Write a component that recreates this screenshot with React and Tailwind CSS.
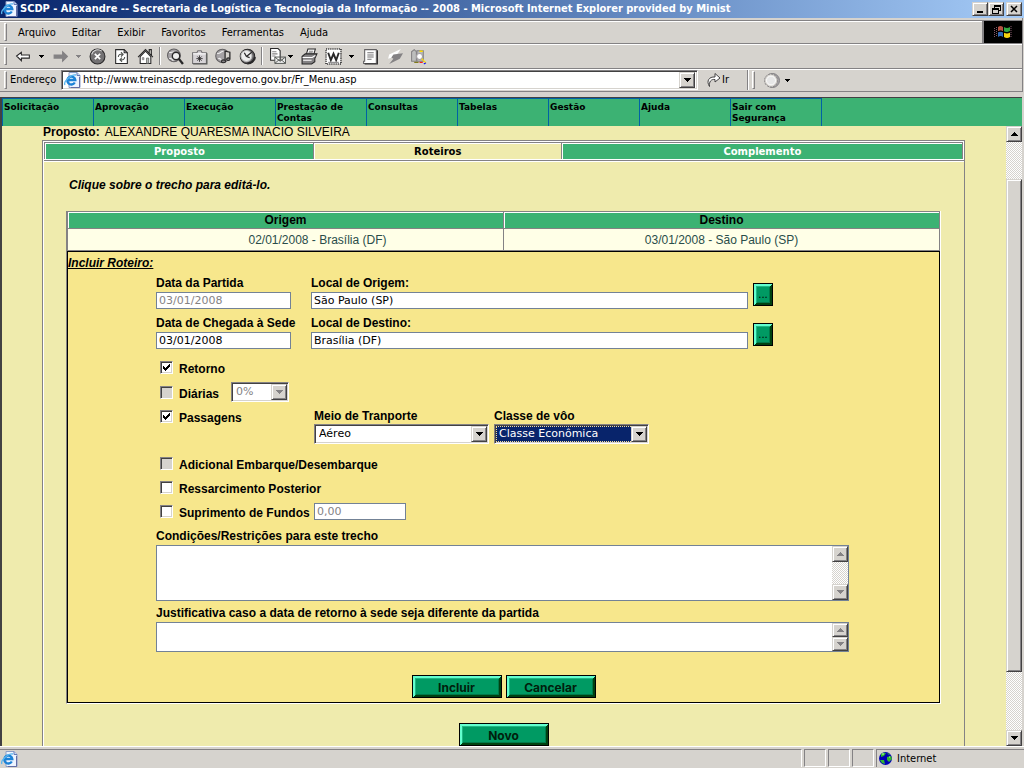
import React, { useState } from 'react';

// --- MENU DATA ---
const BROWSER_MENU = ['Arquivo', 'Editar', 'Exibir', 'Favoritos', 'Ferramentas', 'Ajuda'];
const APP_MENU = ['Solicitação', 'Aprovação', 'Execução', 'Prestação de Contas', 'Consultas', 'Tabelas', 'Gestão', 'Ajuda', 'Sair com Segurança'];

const TAHOMA = "font-['DejaVu_Sans_Condensed','DejaVu_Sans',sans-serif]";
const VERDANA = "font-['DejaVu_Sans',sans-serif]";
const RAISED = 'bg-[#d6d3ce] border border-t-[#d6d3ce] border-l-[#d6d3ce] border-r-[#424142] border-b-[#424142] shadow-[inset_1px_1px_0_#fff,inset_-1px_-1px_0_#848284]';
const SUNKEN = 'border border-t-[#848284] border-l-[#848284] border-r-white border-b-white shadow-[inset_1px_1px_0_#424142,inset_-1px_-1px_0_#d6d3ce]';
const DITHER = 'bg-[repeating-conic-gradient(#fff_0_25%,#d6d3ce_0_50%)] bg-[length:2px_2px]';
const FIELD = `${VERDANA} h-[17px] min-w-0 border border-[#738296] bg-white px-[2px] text-[11px] leading-[15px] font-normal text-black disabled:text-[#848284]`;

// --- ICONS ---
const Arrow = ({ up, color = '#000' }) => (
    <svg width="7" height="4" viewBox="0 0 7 4" shapeRendering="crispEdges" aria-hidden="true">
        <path d={up ? 'M3 0h1v1h1v1h1v1h1v1H0V3h1V2h1V1h1z' : 'M0 0h7v1H6v1H5v1H4v1H3V3H2V2H1V1H0z'} fill={color} />
    </svg>
);

const IeIcon = () => (
    <svg width="17" height="16" viewBox="0 0 17 16" className="shrink-0" aria-hidden="true">
        <path d="M5 .5h8l3 3v12H5z" fill="#eef4ff" stroke="#8c9ec6" />
        <path d="M13 .5v3h3" fill="#c6d7f7" stroke="#637bb5" />
        <path d="M15.500 5v10.500H7" fill="none" stroke="#636da5" />
        <path d="M10.800 10.500A4 4 0 1 1 11.300 8H4" fill="none" stroke="#1c82d6" strokeWidth="2.300" />
        <path d="M1 13C-1 10 7 2 12 3" fill="none" stroke="#5ab6ef" strokeWidth="1.300" />
    </svg>
);

const Icon = ({ children }) => (
    <svg width="17" height="17" viewBox="0 0 16 16" fill="none" stroke="#292829" aria-hidden="true">{children}</svg>
);

const BackIcon = () => <Icon><path d="M1.500 7.500 6 4v2.500h7.500v3H6V12z" fill="#fff" /></Icon>;
const ForwardIcon = () => <Icon><path d="M14.500 8 10 3.500V6.500H2v3h8v3z" fill="#848284" stroke="#848284" /></Icon>;
const StopIcon = () => (
    <Icon>
        <circle cx="8" cy="8" r="7" fill="#737173" />
        <path d="M2.500 6A6 6 0 0 1 12 3" stroke="#ddd" />
        <path d="m5.500 5.500 5 5m0-5-5 5" stroke="#fff" strokeWidth="1.600" />
    </Icon>
);
const RefreshIcon = () => (
    <Icon>
        <path d="M2.500 1.500h8l3 3v10h-11z" fill="#fff" />
        <path d="M10.500 1.500v3h3" />
        <path d="M5 8.500C5 6 7 5.500 9 6M7.500 4l2 2-2 2M11 8.500c0 2.500-2 3-4 2.500M8.500 9l-2 2 2 2" stroke="#525552" />
    </Icon>
);
const HomeIcon = () => (
    <Icon>
        <path d="M3 8v6.500h10V8L8 3z" fill="#fff" />
        <path d="M1 8.500 8 1.500l7 7M11.500 4.500v-3h2v5.500" />
        <path d="M5 9h1.500v2H5z" fill="#a5a2a5" stroke="#848284" strokeWidth=".700" />
        <path d="M9 9.500h2v5H9z" fill="#bdbebd" stroke="#525552" strokeWidth=".700" />
    </Icon>
);
const SearchIcon = () => (
    <Icon>
        <circle cx="6.500" cy="7" r="6" fill="#a5a2a5" stroke="#636163" />
        <path d="M2 4c2 1 3-1 5 0M2 10c2-1 3 1 4 2" stroke="#eee" />
        <circle cx="8.500" cy="7.500" r="3.500" fill="#eee" strokeWidth="1.300" />
        <path d="m11 10 4 5" strokeWidth="2.200" />
    </Icon>
);
const FavoritesIcon = () => (
    <Icon>
        <path d="M1.500 4.500h4l1-2h3l1 2h4v10h-13z" fill="#d6d3d6" stroke="#737173" />
        <path d="M2 5.500h12" stroke="#fff" />
        <path d="M15 5v10H2" stroke="#525552" />
        <path d="M8 7v6M5 10h6M6 8l4 4M10 8l-4 4" strokeWidth=".800" />
    </Icon>
);
const MediaIcon = () => (
    <Icon>
        <circle cx="7" cy="7.500" r="6.300" fill="#a5a2a5" stroke="#636163" />
        <path d="M2 5c3 1 3-2 6-2M3 10c2-1 3 1 4 3" stroke="#eee" />
        <path d="M9.500 12V3l4.500 1v6" fill="#d6d3ce" strokeWidth="1.200" />
        <ellipse cx="8" cy="12.500" rx="2" ry="1.300" fill="#848284" />
        <ellipse cx="12.500" cy="10.500" rx="1.600" ry="1.200" fill="#848284" />
    </Icon>
);
const HistoryIcon = () => (
    <Icon>
        <circle cx="8" cy="8" r="6.800" fill="#636163" />
        <circle cx="7" cy="7.500" r="5.200" fill="#eee" stroke="#bbb" />
        <path d="M7 8 5 4.500M7 8l5-4M7 8l3 1" strokeWidth="1.200" />
        <path d="M8 14.500a7 7 0 0 0 7-6" strokeWidth="2" />
    </Icon>
);
const MailIcon = () => (
    <Icon>
        <path d="M1.500.500h7l2 2v9h-9z" fill="#fff" />
        <path d="M3 3.500h4M3 5.500h5M3 7.500h3" stroke="#848284" />
        <path d="M5.500 8.500h10v6h-10zM5.500 8.500l5 4 5-4M5.500 14.500l4-3.500M15.500 14.500l-4-3.500" fill="#eee" stroke="#525552" strokeWidth=".900" />
    </Icon>
);
const PrintIcon = () => (
    <Icon>
        <path d="M5 6 6.500 1h7L12 6z" fill="#fff" />
        <path d="M7.500 3h4M7 4.500h4" stroke="#848284" />
        <path d="m1 8 3-2.500h11l-2 4.500v3l-3 2H1z" fill="#848284" />
        <path d="M1.500 9h9l3-2M2 11.500h8" stroke="#fff" />
    </Icon>
);
const WordIcon = () => (
    <Icon>
        <path d="M1 1h14v14H1z" fill="#fff" strokeDasharray="1 1" strokeWidth="1.500" />
        <path d="m3 4.500 2.500 7L8 5.500l2.500 6 2.500-7" strokeWidth="1.800" />
        <path d="M3 13.500h10" stroke="#848284" />
    </Icon>
);
const EditIcon = () => (
    <Icon>
        <path d="M2.500 1.500h11v13h-12v-2h1z" fill="#fff" stroke="#636163" />
        <path d="M5 4.500h6M5 6.500h6M5 8.500h6M5 10.500h4" stroke="#737173" />
        <path d="M14.500 2v13h-12" />
    </Icon>
);
const FlashIcon = () => (
    <Icon>
        <path d="M14 1 3 6l-1 4 7-2z" fill="#fff" stroke="none" />
        <path d="m7 6 9-1-3 5-10 5 4-5-2-1z" fill="#848284" stroke="none" />
    </Icon>
);
const ResearchIcon = () => (
    <Icon>
        <path d="M1.500 3.500 4 1.500l2 2v9H1.500z" fill="#bdbebd" stroke="#848284" />
        <path d="M6.500 2.500h6v10h-6z" fill="#bdbebd" stroke="#848284" />
        <circle cx="9" cy="8" r="2.800" fill="#fff" stroke="#a5a2a5" />
        <path d="M9 3h3M11 10l4 4" stroke="#ffdb00" strokeWidth="1.300" />
        <path d="M4 13.500h4" stroke="#736d00" />
        <path d="M9 13.500h3" stroke="#f00" />
        <path d="m13 15 2-1" stroke="#00f" />
    </Icon>
);
const GlobeIcon = () => (
    <svg width="13" height="13" viewBox="0 0 13 13" aria-hidden="true">
        <circle cx="6.500" cy="6.500" r="6.500" fill="#0000b5" />
        <path d="M2 2q2-2 5-1l-2 3-3 1zM8 5l4-1 1 3-3 3-2-2zM1 8l4 0 1 4-3-1zM8 1l3 1-1 1z" fill="#31b631" />
        <path d="M3 2h2M10 5l1 0" stroke="#b5ffb5" />
    </svg>
);

// --- SMALL PARTS ---
const Grip = () => <span className="h-[18px] w-[3px] shrink-0 border border-t-white border-l-white border-r-[#848284] border-b-[#848284]" />;
const Divider = () => <span className="mx-[2px] h-[18px] w-[2px] shrink-0 border-l border-l-[#848284] bg-white" />;

const Tool = ({ label, children }) => (
    <button type="button" aria-label={label} className="flex h-[22px] w-6 shrink-0 items-center justify-center">{children}</button>
);

const DropMark = ({ color = '#000' }) => (
    <span className="flex w-[13px] shrink-0 justify-center">
        <svg width="5" height="3" viewBox="0 0 5 3" shapeRendering="crispEdges" aria-hidden="true">
            <path d="M0 0h5v1H4v1H3v1H2V2H1V1H0z" fill={color} />
        </svg>
    </span>
);

const Check = ({ label, ...props }) => (
    <label className="flex items-center gap-[6px]">
        <span className="grid size-[13px] shrink-0">
            <input type="checkbox" className={`${SUNKEN} peer col-start-1 row-start-1 size-[13px] appearance-none bg-white disabled:bg-[#d6d3ce]`} {...props} />
            <svg viewBox="0 0 13 13" className="pointer-events-none invisible z-10 col-start-1 row-start-1 peer-checked:visible" shapeRendering="crispEdges" aria-hidden="true">
                <path d="M3 5v3l2 2 5-5V2L5 7z" fill="#000" />
            </svg>
        </span>
        <span className="pt-[3px] leading-4">{label}</span>
    </label>
);

const Combo = ({ className = '', selected, disabled, options, ...props }) => (
    <span className={`${SUNKEN} grid h-5 grid-cols-[1fr_16px] bg-white p-px ${className}`}>
        <select
            disabled={disabled}
            className={`${VERDANA} col-span-2 col-start-1 row-start-1 min-w-0 appearance-none pl-[2px] text-[11px] leading-[14px] font-normal disabled:text-[#848284] disabled:opacity-100 ${selected ? 'border border-dotted border-[#f5db95] bg-[#08246b] text-white' : 'border border-white bg-white'}`}
            {...props}
        >
            {options.map(o => <option key={o}>{o}</option>)}
        </select>
        <span className={`${RAISED} pointer-events-none z-10 col-start-2 row-start-1 flex items-center justify-center`}>
            <Arrow color={disabled ? '#848284' : '#000'} />
        </span>
    </span>
);

const TextBox = ({ id, className, stepClass }) => (
    <div className={`flex border border-[#738296] bg-white ${className}`}>
        <textarea id={id} className={`${VERDANA} min-w-0 flex-1 resize-none overflow-hidden px-[2px] text-[11px] font-normal outline-none`} />
        <div className={`flex w-4 flex-col justify-between ${DITHER}`} aria-hidden="true">
            <span className={`${RAISED} flex items-center justify-center ${stepClass}`}><Arrow up color="#848284" /></span>
            <span className={`${RAISED} flex items-center justify-center ${stepClass}`}><Arrow color="#848284" /></span>
        </div>
    </div>
);

const GreenButton = ({ className, ...props }) => (
    <button
        type="button"
        className={`border border-black bg-[#009a63] shadow-[inset_1px_1px_0_#63ffce,inset_-1px_-1px_0_#004110,inset_2px_2px_0_#63ffce,inset_-2px_-2px_0_#004110,inset_3px_3px_0_#21b684,inset_-3px_-3px_0_#00794a] ${className}`}
        {...props}
    />
);

const TextButton = ({ children }) => (
    <GreenButton className="h-[23px] w-[90px] pt-[2px] font-['Inter',sans-serif] text-[12px] leading-4 font-bold text-[#00200c]">{children}</GreenButton>
);

const Place = ({ id, label, value, dateId, dateLabel, dateValue, dateDisabled }) => (
    <div className="flex pr-[76px]">
        <div className="flex w-[155px] flex-col items-start whitespace-nowrap">
            <label htmlFor={dateId} className="leading-[17px]">{dateLabel}</label>
            <input id={dateId} defaultValue={dateValue} disabled={dateDisabled} className={`${FIELD} w-[135px]`} />
        </div>
        <div className="flex min-w-0 flex-1 flex-col">
            <label htmlFor={id} className="leading-[17px]">{label}</label>
            <input id={id} defaultValue={value} className={FIELD} />
        </div>
        <GreenButton aria-label={`Procurar ${label}`} className={`${VERDANA} mt-2 ml-[5px] h-[23px] w-5 text-[10px] leading-4 font-normal`}>...</GreenButton>
    </div>
);

// --- BROWSER FRAME ---
const TitleBar = () => (
    <header className={`${TAHOMA} flex h-[18px] items-center bg-linear-to-r from-[#08246b] to-[#a5cbf7] pr-[2px] pl-px text-white`}>
        <IeIcon />
        <h1 className="min-w-0 flex-1 truncate pl-[2px] text-[11px] leading-[18px] font-bold">SCDP - Alexandre -- Secretaria de Logística e Tecnologia da Informação -- 2008 - Microsoft Internet Explorer provided by Minist</h1>
        <button type="button" aria-label="Minimizar" className={`${RAISED} flex h-[14px] w-4 items-end justify-center pb-[2px]`}><span className="h-[2px] w-[6px] bg-black" /></button>
        <button type="button" aria-label="Restaurar" className={`${RAISED} mr-[2px] flex h-[14px] w-4 items-center justify-center text-black`}>
            <svg width="9" height="9" viewBox="0 0 9 9" shapeRendering="crispEdges" fill="none" stroke="#000"><path d="M2.500 3V.500h6v5H7M2 1.500h7M.500 3.500h6v5h-6zM0 4.500h7" /></svg>
        </button>
        <button type="button" aria-label="Fechar" className={`${RAISED} flex h-[14px] w-4 items-center justify-center`}>
            <svg width="8" height="8" viewBox="0 0 8 8" stroke="#000" strokeWidth="1.500"><path d="m1 1 6 6M7 1 1 7" /></svg>
        </button>
    </header>
);

const BrowserBars = () => (
    <div className={`${TAHOMA} mr-px border-r border-[#848284] text-[11px] leading-[14px]`}>
        <div className="mt-[2px] flex h-6 items-center border-t border-b border-b-[#848284] border-t-[#848284] pl-1 shadow-[inset_0_1px_0_#fff]">
            <Grip />
            <nav className="flex flex-1 gap-4 pt-[2px] pl-[11px]">
                {BROWSER_MENU.map(m => <button type="button" key={m}>{m}</button>)}
            </nav>
            <span className="flex h-[22px] w-10 items-center justify-center border-l-2 border-[#848284] bg-black">
                <svg width="19" height="16" viewBox="0 0 19 16" aria-hidden="true">
                    <path d="M4 3q2.500-2 5 0v4.500q-2.500-2-5 0z" fill="#b55142" />
                    <path d="M10 3q3 2 6 0v4.500q-3 2-6 0z" fill="#31a642" />
                    <path d="M4 8.500q2.500-2 5 0V13q-2.500-2-5 0z" fill="#3169b5" />
                    <path d="M10 8.500q3 2 6 0V13q-3 2-6 0z" fill="#f7d310" />
                    <path d="M9.500 2v12M4 7.500q3-1 6 .500t6-.500" stroke="#000" fill="none" />
                    <path d="M.500 4v9M2.500 3v10M17 2v11" stroke="#84596b" strokeDasharray="1 1" />
                </svg>
            </span>
        </div>
        <div className="flex h-[25px] items-center border-b border-[#848284] pl-1 shadow-[inset_0_1px_0_#fff]">
            <Grip />
            <span className="w-1" />
            <Tool label="Voltar"><BackIcon /></Tool>
            <DropMark />
            <Tool label="Avançar"><ForwardIcon /></Tool>
            <DropMark color="#848284" />
            <Tool label="Parar"><StopIcon /></Tool>
            <Tool label="Atualizar"><RefreshIcon /></Tool>
            <Tool label="Página inicial"><HomeIcon /></Tool>
            <Divider />
            <Tool label="Pesquisar"><SearchIcon /></Tool>
            <Tool label="Favoritos"><FavoritesIcon /></Tool>
            <Tool label="Mídia"><MediaIcon /></Tool>
            <Tool label="Histórico"><HistoryIcon /></Tool>
            <Divider />
            <Tool label="Correio"><MailIcon /></Tool>
            <span className="-ml-[5px]"><DropMark /></span>
            <Tool label="Imprimir"><PrintIcon /></Tool>
            <Tool label="Editar com Word"><WordIcon /></Tool>
            <DropMark />
            <Tool label="Editar"><EditIcon /></Tool>
            <Tool label="Messenger"><FlashIcon /></Tool>
            <Tool label="Pesquisa"><ResearchIcon /></Tool>
        </div>
        <div className="flex h-[23px] items-center border-b border-[#848284] pl-1 shadow-[inset_0_1px_0_#fff]">
            <Grip />
            <label htmlFor="endereco" className="w-[54px] pl-[3px]">Endereço</label>
            <div className={`${SUNKEN} flex h-5 min-w-0 flex-1 items-center bg-white p-[2px]`}>
                <IeIcon />
                <input id="endereco" defaultValue="http://www.treinascdp.redegoverno.gov.br/Fr_Menu.asp" className="min-w-0 flex-1 pl-[2px] outline-none" />
                <span className={`${RAISED} flex h-4 w-4 items-center justify-center`}><Arrow /></span>
            </div>
            <div className="flex w-[324px] items-center">
                <button type="button" className="flex w-[49px] items-center pl-2">
                    <svg width="16" height="16" viewBox="0 0 16 16" fill="#fff" stroke="#424142" aria-hidden="true"><path d="M3.500 14.500C0 9 3 4.500 9 5V1.500l5 4.500-5 4V7.500c-4-.500-6 2-5.500 7z" /></svg>
                    Ir
                </button>
                <span className="h-5 w-[2px] border-l border-[#848284] bg-white" />
                <span className="ml-[3px] flex items-center">
                    <Grip />
                    <svg width="18" height="17" viewBox="0 0 18 17" className="ml-2" aria-hidden="true">
                        <circle cx="9.500" cy="8.500" r="7" fill="#a5a2a5" stroke="#848284" />
                        <circle cx="8" cy="8.500" r="6.500" fill="#d6d3ce" stroke="#848284" strokeDasharray="2 1" />
                        <circle cx="8" cy="8.500" r="4.500" fill="#e7e7e7" stroke="#fff" />
                    </svg>
                    <DropMark />
                </span>
            </div>
        </div>
    </div>
);

const StatusBar = () => (
    <footer className={`${TAHOMA} flex h-[22px] shrink-0 gap-[2px] border-t border-white pt-[2px] pb-px text-[11px] leading-4`}>
        <div className="flex flex-1 items-center border-t border-r border-t-[#848284] border-r-white pl-px"><IeIcon /></div>
        <div className="w-[22px] border border-t-[#848284] border-l-[#848284] border-r-white border-b-white" />
        <div className="w-[22px] border border-t-[#848284] border-l-[#848284] border-r-white border-b-white" />
        <div className="w-[22px] border border-t-[#848284] border-l-[#848284] border-r-white border-b-white" />
        <div className="flex w-[148px] items-center gap-[5px] border-t border-l border-[#848284] pl-[2px]"><GlobeIcon />Internet</div>
    </footer>
);

const PageScroll = () => (
    <div className={`flex w-4 shrink-0 flex-col ${DITHER}`} aria-hidden="true">
        <span className={`${RAISED} flex h-4 items-center justify-center`}><Arrow up /></span>
        <span className="flex-[37]" />
        <span className={`${RAISED} flex-[494]`} />
        <span className="flex-[58]" />
        <span className={`${RAISED} flex h-4 items-center justify-center`}><Arrow /></span>
    </div>
);

// --- FORM ---
const RoteiroForm = () => {
    const [retorno, setRetorno] = useState(true);
    const [passagens, setPassagens] = useState(true);

    return (
        <form className="border border-black bg-[#f7e78c] pb-1 font-bold">
            <h2 className="h-[23px] text-[12px] leading-[22px] italic underline">Incluir Roteiro:</h2>
            <div className="pr-[90px] pl-[88px]">
                <div className="flex flex-col gap-[6px]">
                    <Place id="origem" label="Local de Origem:" value="São Paulo (SP)" dateId="partida" dateLabel="Data da Partida" dateValue="03/01/2008" dateDisabled />
                    <Place id="destino" label="Local de Destino:" value="Brasília (DF)" dateId="chegada" dateLabel="Data de Chegada à Sede" dateValue="03/01/2008" />
                </div>

                <div className="mt-[6px] pl-1">
                    <div className="flex h-[25px] items-center"><Check label="Retorno" checked={retorno} onChange={e => setRetorno(e.target.checked)} /></div>
                    <div className="flex h-6 items-center">
                        <span className="w-[71px]"><Check label="Diárias" disabled /></span>
                        <Combo aria-label="Percentual de diárias" className="w-[58px]" options={['0%']} disabled />
                    </div>
                    <div className="flex h-[47px] items-start">
                        <div className="flex h-6 w-[154px] items-center"><Check label="Passagens" checked={passagens} onChange={e => setPassagens(e.target.checked)} /></div>
                        <div className="flex flex-wrap gap-[5px] pt-1">
                            <label className="flex w-[175px] flex-col leading-4">Meio de Tranporte<Combo options={['Aéreo']} /></label>
                            <label className="flex w-[155px] flex-col leading-4">Classe de vôo<Combo options={['Classe Econômica']} selected /></label>
                        </div>
                    </div>
                    <div className="flex h-6 items-center"><Check label="Adicional Embarque/Desembarque" disabled /></div>
                    <div className="flex h-6 items-center"><Check label="Ressarcimento Posterior" /></div>
                    <div className="flex h-6 items-center">
                        <span className="w-[154px] whitespace-nowrap"><Check label="Suprimento de Fundos" /></span>
                        <input aria-label="Valor do suprimento" defaultValue="0,00" disabled className={`${FIELD} w-[92px]`} />
                    </div>
                </div>

                <label htmlFor="condicoes" className="mt-1 block leading-[18px]">Condições/Restrições para este trecho</label>
                <TextBox id="condicoes" className="h-14" stepClass="h-4" />
                <label htmlFor="justificativa" className="mt-1 block leading-[17px]">Justificativa caso a data de retorno à sede seja diferente da partida</label>
                <TextBox id="justificativa" className="h-[30px]" stepClass="h-[14px]" />
            </div>
            <div className="mt-[23px] flex justify-center gap-1">
                <TextButton>Incluir</TextButton>
                <TextButton>Cancelar</TextButton>
            </div>
        </form>
    );
};

const App = () => (
    <div className="flex h-screen min-h-[768px] flex-col bg-[#d6d3ce] text-black">
        <TitleBar />
        <BrowserBars />

        <div className="mt-[5px] mr-[2px] flex min-h-0 flex-1 flex-col border-t border-l-2 border-[#424142]">
            <nav className={`${VERDANA} flex h-7 shrink-0 bg-[#3cb273] text-[9px] leading-[11px] font-bold`}>
                {APP_MENU.map(m => (
                    <a key={m} href="#" className="w-[91px] border-t border-l border-[#0061a5] pt-[3px] pl-px last:w-[92px] last:border-r">{m}</a>
                ))}
            </nav>

            <div className="flex min-h-0 flex-1">
                <main className="flex min-w-0 flex-1 flex-col overflow-hidden bg-[#efebad] pr-[41px] pl-10 font-['Liberation_Sans',Arial,sans-serif] text-[12px]">
                    <p className="flex h-[14px] shrink-0 gap-[5px] pl-px leading-3"><b>Proposto:</b>ALEXANDRE QUARESMA INACIO SILVEIRA</p>

                    <div className="flex flex-1 flex-col border-x border-t border-[#848284]">
                        <div className="flex flex-1 flex-col border-l border-white">
                            <div className="border-b border-[#848284] bg-white py-px pr-px">
                                <div className={`${VERDANA} grid h-[17px] grid-cols-[269fr_248fr_402fr] gap-px border border-[#848284] bg-[#848284] text-center text-[10px] leading-[15px] font-bold`}>
                                    <a href="#" className="border-t border-l border-white bg-[#3cb273] text-white">Proposto</a>
                                    <a href="#" className="border-t border-l border-white bg-[#efebad]">Roteiros</a>
                                    <a href="#" className="border-t border-l border-white bg-[#3cb273] text-white">Complemento</a>
                                </div>
                            </div>

                            <div className="border-t border-white pr-[23px] pl-[22px]">
                                <p className="pt-[15px] pb-[18px] pl-[3px] leading-4 font-bold italic">Clique sobre o trecho para editá-lo.</p>

                                <div className="border-r border-b border-l border-r-white border-b-white border-l-[#848284]">
                                    <table className="w-full table-fixed border-collapse border-x border-[#848284]">
                                        <thead>
                                            <tr className="bg-[#3cb273]">
                                                <th className="border border-[#848284] py-0 leading-4 shadow-[inset_1px_1px_0_#fff]">Origem</th>
                                                <th className="border border-[#848284] py-0 leading-4 shadow-[inset_1px_1px_0_#fff]">Destino</th>
                                            </tr>
                                        </thead>
                                        <tbody>
                                            <tr className="bg-[#ffffe7] text-center text-[#294d4a]">
                                                <td className="h-[22px] border border-[#848284] py-0 pr-0 pl-16">02/01/2008 - Brasília (DF)</td>
                                                <td className="h-[22px] border border-[#848284] p-0">03/01/2008 - São Paulo (SP)</td>
                                            </tr>
                                        </tbody>
                                    </table>
                                    <RoteiroForm />
                                </div>

                                <div className="mt-[19px] flex justify-center"><TextButton>Novo</TextButton></div>
                            </div>
                        </div>
                    </div>
                </main>
                <PageScroll />
            </div>
        </div>

        <StatusBar />
    </div>
);

export default App;
